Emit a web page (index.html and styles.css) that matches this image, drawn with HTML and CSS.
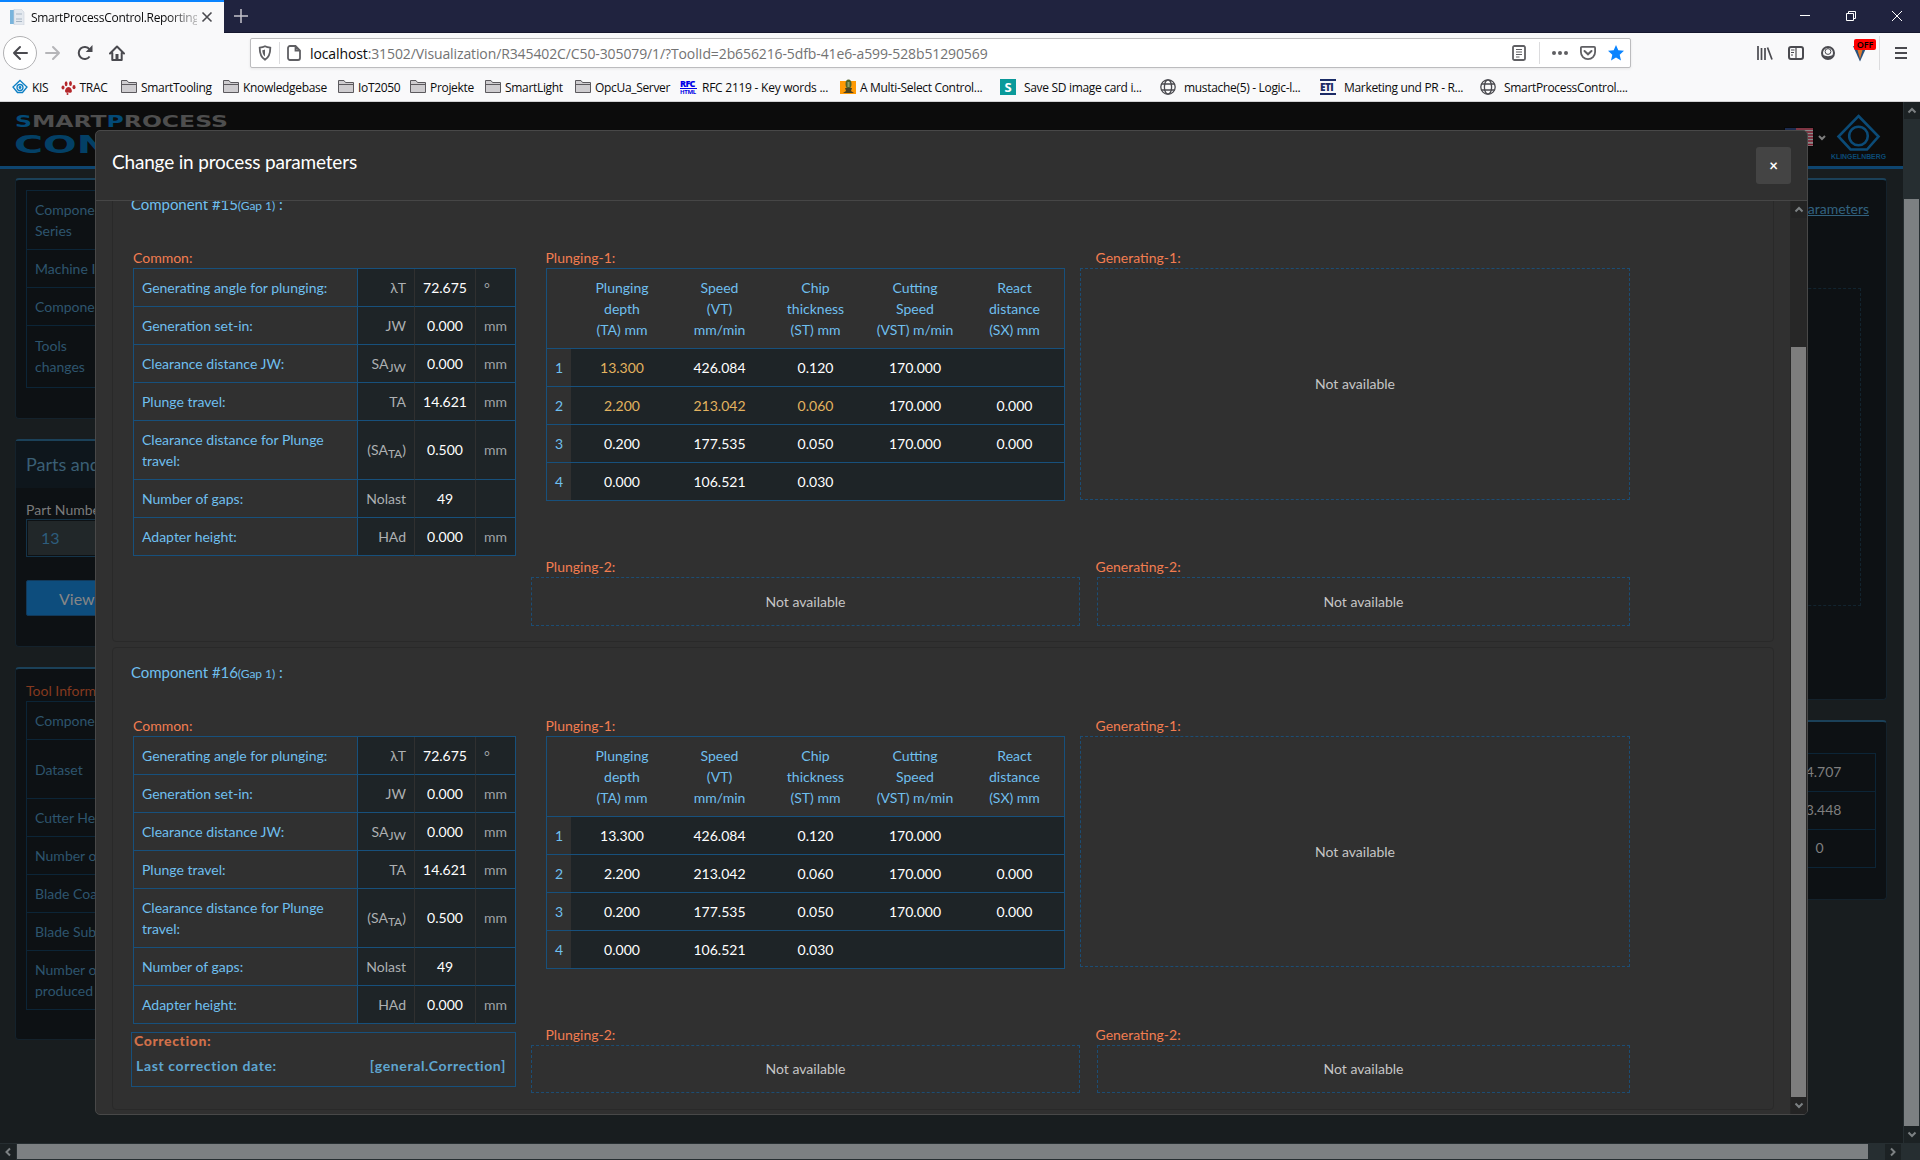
FILE: index.html
```html
<!DOCTYPE html>
<html lang="en">
<head>
<meta charset="utf-8">
<title>SmartProcessControl.Reporting</title>
<link rel="stylesheet" href="styles.css">
</head>
<body>
<svg class="defs" width="0" height="0">
  <symbol id="folder" viewBox="0 0 16 16"><path d="M.5 13.500V1.500h5.500l1.500 2h8v10z" fill="#cfcdd0" stroke="#5c5a5e"/><path d="M1 5.500h14" stroke="#5c5a5e"/></symbol>
  <symbol id="globe" viewBox="0 0 16 16"><g fill="none" stroke="#4a4a4f" stroke-width="1.300"><circle cx="8" cy="8" r="7.200"/><ellipse cx="8" cy="8" rx="3.600" ry="7.200"/><path d="M1.500 5h13M1.500 11h13"/></g></symbol>
  <symbol id="up" viewBox="0 0 16 16"><path d="M4.500 10L8 6.500l3.500 3.500" fill="none" stroke="currentColor" stroke-width="2"/></symbol>
</svg>
<div class="browser">
  <div class="tabbar">
    <div class="tab">
      <svg width="16" height="16" viewBox="0 0 16 16"><path d="M1 1h4v14H1z" fill="#79b4dc"/><path d="M5 0h7l3 3v13H5z" fill="#e4e9ef" stroke="#c9d1da" stroke-width=".6"/><path d="M7 5h6M7 10h6M7 12.500h6" stroke="#a9b6c4"/></svg>
      <span class="tab-title">SmartProcessControl.Reporting</span>
      <svg width="12" height="12" viewBox="0 0 12 12"><path d="M1.500 1.500l9 9M10.500 1.500l-9 9" stroke="#4a4a4f" stroke-width="1.600"/></svg>
    </div>
    <svg class="newtab" width="14" height="14" viewBox="0 0 14 14"><path d="M7 0v14M0 7h14" stroke="#c3c3cc" stroke-width="1.500"/></svg>
    <div class="winbtns">
      <svg width="10" height="10" viewBox="0 0 10 10"><path d="M0 4.500h10" stroke="#fff"/></svg>
      <svg width="10" height="10" viewBox="0 0 10 10"><path d="M.5 2.500h7v7h-7zM2.500 2.500v-2h7v7h-2" fill="none" stroke="#fff"/></svg>
      <svg width="10" height="10" viewBox="0 0 10 10"><path d="M0 0l10 10M10 0L0 10" stroke="#fff"/></svg>
    </div>
  </div>
  <div class="navbar">
    <div class="back"><svg width="16" height="16" viewBox="0 0 16 16"><path d="M15 8H2M8 2L2 8l6 6" fill="none" stroke="#4a4a4f" stroke-width="2" stroke-linecap="round" stroke-linejoin="round"/></svg></div>
    <svg class="fwd" width="16" height="16" viewBox="0 0 16 16"><path d="M1 8h13M8 2l6 6-6 6" fill="none" stroke="#b5b5b8" stroke-width="2" stroke-linecap="round" stroke-linejoin="round"/></svg>
    <svg class="reload" width="16" height="16" viewBox="0 0 16 16"><path d="M12.600 11.500A6 6 0 1 1 12.500 4.300" fill="none" stroke="#4a4a4f" stroke-width="2"/><path d="M15.500 0v7H8.700z" fill="#4a4a4f"/></svg>
    <svg class="home" width="16" height="16" viewBox="0 0 16 16"><path d="M1 8.500L8 1.500l7 7M3.300 8v7h9.400V8" fill="none" stroke="#4a4a4f" stroke-width="2" stroke-linecap="round" stroke-linejoin="round"/><path d="M6.500 9h3v6h-3z" fill="#4a4a4f"/></svg>
    <div class="urlbar">
      <svg class="shield" width="16" height="16" viewBox="0 0 16 16"><path d="M8 1.300c2 1 3.500 1.200 5.300 1.400 0 5.500-.8 9.300-5.300 12C3.500 12 2.700 8.200 2.700 2.700 4.500 2.500 6 2.300 8 1.300z" fill="none" stroke="#5f5f63" stroke-width="1.800"/><path d="M8 4.500v7c-2-1.500-2.600-3.700-2.700-6.300 1-.2 1.900-.3 2.700-.7z" fill="#5f5f63"/></svg>
      <i class="vsep"></i>
      <svg class="page" width="14" height="16" viewBox="0 0 14 16"><path d="M3 1h5.500L13 5.500V13a2 2 0 0 1-2 2H3a2 2 0 0 1-2-2V3a2 2 0 0 1 2-2zM8.500 1v4.500H13" fill="none" stroke="#5f5f63" stroke-width="1.800"/></svg>
      <span class="url"><b>localhost</b>:31502/Visualization/R345402C/C50-305079/1/?ToolId=2b656216-5dfb-41e6-a599-528b51290569</span>
      <svg class="reader" width="14" height="16" viewBox="0 0 14 16"><rect x="1" y="1" width="12" height="14" rx="1.500" fill="none" stroke="#5f5f63" stroke-width="1.800"/><path d="M4 4.500h6M4 7h6M4 9.500h6M4 12h3.500" stroke="#5f5f63"/></svg>
      <i class="vsep tall"></i>
      <svg class="dots" width="16" height="16" viewBox="0 0 16 16" fill="#5f5f63"><circle cx="2" cy="8" r="2"/><circle cx="8" cy="8" r="2"/><circle cx="14" cy="8" r="2"/></svg>
      <svg class="pocket" width="16" height="16" viewBox="0 0 16 16"><path d="M1.900 1.900h12.200a1 1 0 0 1 1 1V7A7 7 0 0 1 .9 7V2.900a1 1 0 0 1 1-1z" fill="none" stroke="#5f5f63" stroke-width="1.800"/><path d="M4.500 6L8 9.300 11.500 6" fill="none" stroke="#5f5f63" stroke-width="2" stroke-linecap="round"/></svg>
      <svg class="star" width="16" height="16" viewBox="0 0 16 16"><path d="M8 0l2.300 5.200 5.700.6-4.300 3.900L13 15.500l-5-2.900-5 2.900 1.300-5.800L0 5.800l5.700-.6z" fill="#0a84ff"/></svg>
    </div>
    <div class="tools">
      <svg class="lib" width="16" height="14" viewBox="0 0 16 14"><path d="M1 0v14M4.500 2v12M8 2v12M10.500 1.500l4.500 12" stroke="#4a4a4f" stroke-width="1.700"/></svg>
      <svg class="side" width="16" height="14" viewBox="0 0 16 14"><rect x="1" y="1" width="14" height="12" rx="2" fill="none" stroke="#4a4a4f" stroke-width="2"/><path d="M8 1v12M3 4h3.500M3 6.500h3M3 9h2" stroke="#4a4a4f" stroke-width="1.200"/></svg>
      <svg class="acct" width="14" height="14" viewBox="0 0 14 14"><circle cx="7" cy="7" r="6" fill="none" stroke="#4a4a4f" stroke-width="2"/><circle cx="7" cy="5.500" r="2.900" fill="#f9f9fa" stroke="#4a4a4f" stroke-width="1"/><path d="M2 8.500c2 2.300 8 2.300 10 0-1 5-9 5-10 0z" fill="#4a4a4f"/></svg>
      <div class="filter"><svg width="14" height="17" viewBox="0 0 14 17"><path d="M0 1h14L7 16.500z" fill="#27507c"/><path d="M4.500 5h5L7 14z" fill="#e0762b"/></svg><span class="off">OFF</span></div>
      <i class="vsep edge"></i>
      <svg class="burger" width="12" height="12" viewBox="0 0 12 12"><path d="M0 1h12M0 6h12M0 11h12" stroke="#4a4a4f" stroke-width="2"/></svg>
    </div>
  </div>
  <div class="bookmarks">
    <div class="bm"><svg width="16" height="16" viewBox="0 0 16 16" fill="none" stroke="#0d7fc4" stroke-width="1.300"><path d="M8 1.500L15 8l-4.500 5.500h-5L1 8z"/><circle cx="8" cy="8.500" r="3"/><circle cx="8" cy="8.500" r=".8"/></svg><span>KIS</span></div>
    <div class="bm"><svg width="15" height="16" viewBox="0 0 15 16" fill="#b4262a"><path d="M7.500 8c2.500 0 4 3.500 3.200 5-.9 1.200-1.700.4-3.200.4s-2.300.8-3.200-.4C3.500 11.500 5 8 7.500 8z"/><ellipse cx="2" cy="8.500" rx="1.500" ry="2.100"/><ellipse cx="5.100" cy="4.800" rx="1.400" ry="2.500"/><ellipse cx="9.500" cy="4.600" rx="1.400" ry="2.500"/><ellipse cx="13" cy="8.200" rx="1.500" ry="2.100"/><circle cx="6.500" cy="15" r="1"/></svg><span>TRAC</span></div>
    <div class="bm"><svg width="16" height="16"><use href="#folder"/></svg><span>SmartTooling</span></div>
    <div class="bm"><svg width="16" height="16"><use href="#folder"/></svg><span>Knowledgebase</span></div>
    <div class="bm"><svg width="16" height="16"><use href="#folder"/></svg><span>IoT2050</span></div>
    <div class="bm"><svg width="16" height="16"><use href="#folder"/></svg><span>Projekte</span></div>
    <div class="bm"><svg width="16" height="16"><use href="#folder"/></svg><span>SmartLight</span></div>
    <div class="bm"><svg width="16" height="16"><use href="#folder"/></svg><span>OpcUa_Server</span></div>
    <div class="bm rfc-bm"><span class="rfc"><b>RFC</b><small>HTML</small></span><span>RFC 2119 - Key words ...</span></div>
    <div class="bm"><svg width="16" height="16" viewBox="0 0 16 16"><path d="M0 2h16v13H0z" fill="#ff9a05"/><ellipse cx="8.500" cy="5" rx="3" ry="4.500" fill="#51642c"/><path d="M5 9h7l-1 3 3 2H3l3-2z" fill="#4a4222"/><path d="M7.500 3h2v5h-2z" fill="#8fa06a"/></svg><span>A Multi-Select Control...</span></div>
    <div class="bm wide"><span class="sicon">S</span><span>Save SD image card i...</span></div>
    <div class="bm wide"><svg width="16" height="16"><use href="#globe"/></svg><span>mustache(5) - Logic-l...</span></div>
    <div class="bm wide"><span class="eti">ETI</span><span>Marketing und PR - R...</span></div>
    <div class="bm wide"><svg width="16" height="16"><use href="#globe"/></svg><span>SmartProcessControl....</span></div>
  </div>

  <div class="viewport">
    <div class="site">
      <header class="site-head">
        <svg class="brand" width="230" height="56" viewBox="0 0 230 56">
          <text x="15" y="25" textLength="213" lengthAdjust="spacingAndGlyphs" class="brand-a"><tspan class="bl">S</tspan>MART<tspan class="bl">P</tspan>ROCESS</text>
          <text x="14" y="51" textLength="212" lengthAdjust="spacingAndGlyphs" class="brand-b">CONTROL</text>
        </svg>
        <div class="head-right">
          <svg class="flag" width="30" height="20" viewBox="0 0 30 20"><path d="M0 0h30v20H0z" fill="#080808"/><path d="M1 1h28v18H1z" fill="#8a8a8a"/><path d="M1 2h28M1 5h28M1 8h28M1 11h28M1 14h28M1 17.500h28" stroke="#7c1a2c" stroke-width="1.500"/><path d="M1 1h11v9H1z" fill="#1d2c4f"/></svg>
          <svg class="caret" width="8" height="6" viewBox="0 0 8 6"><path d="M1 1l3 3 3-3" fill="none" stroke="#7e7e7e" stroke-width="2"/></svg>
          <svg class="kling" width="56" height="47" viewBox="0 0 56 47"><g fill="none" stroke="#0b4b77" stroke-width="2.600"><path d="M27.500 3L47.500 23.500 36 36.500H19.500L7.500 23.500z"/><circle cx="27.500" cy="23" r="9.300"/></g><text x="0" y="46" textLength="55" lengthAdjust="spacingAndGlyphs" class="kling-t">KLINGELNBERG</text></svg>
        </div>
      </header>
      <div class="cols">
        <div class="col-left">
          <section class="card c1">
            <div class="list">
              <div>Component<br>Series</div><div>Machine ID</div><div>Component</div><div class="t62">Tools<br>changes</div>
            </div>
          </section>
          <section class="card c2">
            <h3>Parts and Tools</h3>
            <label>Part Number</label>
            <div class="field">13</div>
            <div class="btn">View parts</div>
          </section>
          <section class="card c3">
            <h4>Tool Information</h4>
            <div class="list">
              <div>Component</div><div class="t59">Dataset</div><div>Cutter Head</div><div>Number of</div><div>Blade Coating</div><div>Blade Substrate</div><div>Number of<br>produced</div>
            </div>
          </section>
        </div>
        <div class="col-right">
          <section class="card c4"><a>Parameters</a><div class="dots-box"></div></section>
          <section class="card c5"><div class="vals"><div>14.707</div><div>13.448</div><div>0</div></div></section>
        </div>
      </div>
    </div>
    <div class="vbar"><svg class="sb" width="16" height="17"><use href="#up"/></svg><i></i><svg class="sb dn" width="16" height="17"><use href="#up"/></svg></div>
    <div class="hbar"><svg class="sb lf" width="16" height="16"><use href="#up"/></svg><i></i><svg class="sb rt" width="16" height="16"><use href="#up"/></svg></div>

    <div class="modal">
      <div class="modal-head"><h2>Change in process parameters</h2><div class="close">×</div></div>
      <div class="modal-body">
        <div class="scroll">
          <section class="comp">
            <h5>Component #15<small>(Gap 1)</small> :</h5>
            <div class="grid">
              <div class="common">
                <h6>Common:</h6>
                <table class="kv">
                  <tr><th>Generating angle for plunging:</th><td>λT</td><td>72.675</td><td>°</td></tr>
                  <tr><th>Generation set-in:</th><td>JW</td><td>0.000</td><td>mm</td></tr>
                  <tr><th>Clearance distance JW:</th><td>SA<sub>JW</sub></td><td>0.000</td><td>mm</td></tr>
                  <tr><th>Plunge travel:</th><td>TA</td><td>14.621</td><td>mm</td></tr>
                  <tr><th>Clearance distance for Plunge travel:</th><td>(SA<sub>TA</sub>)</td><td>0.500</td><td>mm</td></tr>
                  <tr><th>Number of gaps:</th><td>Nolast</td><td>49</td><td></td></tr>
                  <tr><th>Adapter height:</th><td>HAd</td><td>0.000</td><td>mm</td></tr>
                </table>
              </div>
              <div class="cell">
                <h6>Plunging-1:</h6>
                <table class="steps">
                  <tr><th></th><th>Plunging<br>depth<br>(TA) mm</th><th>Speed<br>(VT)<br>mm/min</th><th>Chip<br>thickness<br>(ST) mm</th><th>Cutting<br>Speed<br>(VST) m/min</th><th>React<br>distance<br>(SX) mm</th></tr>
                  <tr><th>1</th><td class="hi">13.300</td><td>426.084</td><td>0.120</td><td>170.000</td><td></td></tr>
                  <tr><th>2</th><td class="hi">2.200</td><td class="hi">213.042</td><td class="hi">0.060</td><td>170.000</td><td>0.000</td></tr>
                  <tr><th>3</th><td>0.200</td><td>177.535</td><td>0.050</td><td>170.000</td><td>0.000</td></tr>
                  <tr><th>4</th><td>0.000</td><td>106.521</td><td>0.030</td><td></td><td></td></tr>
                </table>
              </div>
              <div class="cell"><h6>Generating-1:</h6><div class="na big">Not available</div></div>
              <div class="cell"><h6>Plunging-2:</h6><div class="na">Not available</div></div>
              <div class="cell"><h6>Generating-2:</h6><div class="na inset">Not available</div></div>
            </div>
          </section>
          <section class="comp last">
            <h5>Component #16<small>(Gap 1)</small> :</h5>
            <div class="grid">
              <div class="common">
                <h6>Common:</h6>
                <table class="kv">
                  <tr><th>Generating angle for plunging:</th><td>λT</td><td>72.675</td><td>°</td></tr>
                  <tr><th>Generation set-in:</th><td>JW</td><td>0.000</td><td>mm</td></tr>
                  <tr><th>Clearance distance JW:</th><td>SA<sub>JW</sub></td><td>0.000</td><td>mm</td></tr>
                  <tr><th>Plunge travel:</th><td>TA</td><td>14.621</td><td>mm</td></tr>
                  <tr><th>Clearance distance for Plunge travel:</th><td>(SA<sub>TA</sub>)</td><td>0.500</td><td>mm</td></tr>
                  <tr><th>Number of gaps:</th><td>Nolast</td><td>49</td><td></td></tr>
                  <tr><th>Adapter height:</th><td>HAd</td><td>0.000</td><td>mm</td></tr>
                </table>
                <div class="corr"><strong>Correction:</strong><p><span>Last correction date:</span><span class="cv">[general.Correction]</span></p></div>
              </div>
              <div class="cell">
                <h6>Plunging-1:</h6>
                <table class="steps">
                  <tr><th></th><th>Plunging<br>depth<br>(TA) mm</th><th>Speed<br>(VT)<br>mm/min</th><th>Chip<br>thickness<br>(ST) mm</th><th>Cutting<br>Speed<br>(VST) m/min</th><th>React<br>distance<br>(SX) mm</th></tr>
                  <tr><th>1</th><td>13.300</td><td>426.084</td><td>0.120</td><td>170.000</td><td></td></tr>
                  <tr><th>2</th><td>2.200</td><td>213.042</td><td>0.060</td><td>170.000</td><td>0.000</td></tr>
                  <tr><th>3</th><td>0.200</td><td>177.535</td><td>0.050</td><td>170.000</td><td>0.000</td></tr>
                  <tr><th>4</th><td>0.000</td><td>106.521</td><td>0.030</td><td></td><td></td></tr>
                </table>
              </div>
              <div class="cell"><h6>Generating-1:</h6><div class="na big">Not available</div></div>
              <div class="cell"><h6>Plunging-2:</h6><div class="na">Not available</div></div>
              <div class="cell"><h6>Generating-2:</h6><div class="na inset">Not available</div></div>
            </div>
          </section>
        </div>
        <div class="mbar"><svg class="sb" width="16" height="17"><use href="#up"/></svg><i></i><svg class="sb dn" width="16" height="17"><use href="#up"/></svg></div>
      </div>
    </div>
  </div>
</div>
</body>
</html>
```
FILE: styles.css
```css
* { box-sizing: border-box; }
body { margin: 0; font-family: Lato, sans-serif; font-size: 14px; line-height: 21px; }
h2, h3, h4, h5, h6, p { margin: 0; font-weight: 400; }
svg { display: block; flex: none; }
.defs { position: absolute; }
.browser { width: 1920px; height: 1160px; overflow: hidden; display: flex; flex-direction: column; }

/* browser chrome */
.tabbar, .navbar, .bookmarks { font-family: "Open Sans", sans-serif; }
.tabbar { height: 33px; flex: none; background: #20233f; display: flex; align-items: center; border-bottom: 1px solid #15172e; }
.tab { width: 224px; height: 33px; background: #f9f9fa; border-top: 2px solid #0a84ff; display: flex; align-items: center; padding-left: 9px; }
.tab-title { width: 166px; margin-left: 6px; margin-right: 4px; font-size: 12px; letter-spacing: -.3px; color: #0c0c0d; white-space: nowrap; overflow: hidden; -webkit-mask-image: linear-gradient(90deg, #000 136px, rgba(0,0,0,.25) 166px); mask-image: linear-gradient(90deg, #000 136px, rgba(0,0,0,.25) 166px); }
.newtab { margin-left: 10px; }
.winbtns { margin-left: auto; display: flex; gap: 36px; padding-right: 18px; }
.navbar { height: 39px; flex: none; background: #f9f9fa; display: flex; align-items: center; padding-top: 1px; }
.back { width: 34px; height: 34px; margin-left: 3px; border: 1px solid #b1b1b3; border-radius: 50%; display: flex; align-items: center; justify-content: center; background: #fff; }
.fwd { margin-left: 8px; }
.reload { margin-left: 16px; }
.home { margin-left: 16px; }
.urlbar { margin-left: 125px; width: 1381px; height: 30px; background: #fff; border: 1px solid #bcbcbe; border-radius: 2px; box-shadow: 0 1px 3px rgba(0,0,0,.08); display: flex; align-items: center; padding-left: 6px; }
.vsep { width: 1px; height: 22px; background: #dcdcde; margin-left: 6px; }
.page { margin-left: 7px; }
.url { margin-left: 9px; width: 1202px; font-size: 14px; letter-spacing: -.11px; color: #737373; white-space: nowrap; }
.url b { font-weight: 400; color: #0c0c0d; }
.vsep.tall { margin-left: 13px; }
.dots { margin-left: 12px; }
.pocket, .star { margin-left: 12px; }
.tools { display: flex; align-items: center; flex: 1; }
.lib { margin-left: 126px; }
.side { margin-left: 15px; }
.acct { margin-left: 17px; }
.filter { position: relative; margin-left: 18px; width: 26px; height: 17px; }
.off { position: absolute; left: 1px; top: -6px; width: 22px; height: 11px; background: #f00; border-radius: 2px; font-size: 9px; font-weight: 600; line-height: 11px; text-align: center; color: #000; }
.vsep.edge { height: 34px; margin-left: 0; }
.burger { margin-left: 15px; }
.bookmarks { height: 30px; flex: none; background: #f9f9fa; border-bottom: 1px solid #d2d2d4; display: grid; grid-template-columns: 48.500px 60.500px 102px 115px 72px 75px 90px 105px 160px 160px 160px 160px 160px 160px; padding: 1px 0 0 12px; align-items: center; }
.bm { display: flex; align-items: center; gap: 4px; font-size: 12px; letter-spacing: -.32px; color: #0c0c0d; white-space: nowrap; }
.bm.rfc-bm { gap: 5px; letter-spacing: -.25px; }
.bm.wide { gap: 8px; }
.rfc { width: 17px; height: 16px; color: #0000e6; display: flex; flex-direction: column; }
.rfc b { font-size: 9px; line-height: 9px; font-weight: 800; letter-spacing: -.7px; border-bottom: 1px solid; }
.rfc small { font-size: 6px; line-height: 6px; font-weight: 700; letter-spacing: -.3px; }
.sicon { width: 16px; height: 16px; background: #0a9a9a; color: #fff; font-weight: 700; text-align: center; line-height: 16px; font-size: 13px; }
.eti { width: 16px; height: 16px; border-top: 2px solid #1c2b66; border-bottom: 2px solid #1c2b66; color: #1c2b66; font-weight: 800; font-size: 10px; line-height: 12px; letter-spacing: -.6px; }

/* page behind the dialog */
.viewport { position: relative; flex: 1; background: #181d1f; }
.site { height: 1041px; width: 1903px; overflow: hidden; }
.site-head { height: 67px; background: #0c0c0c; border-bottom: 3px solid #0e456f; display: flex; justify-content: space-between; }
.brand-a { font: 700 15px "DejaVu Sans", sans-serif; fill: #4e4e4e; }
.brand-a .bl { fill: #034a77; }
.brand-b { font: 700 25px "DejaVu Sans", sans-serif; fill: #034066; }
.head-right { display: flex; align-items: flex-start; padding-right: 16px; }
.flag { margin-top: 25px; }
.caret { margin: 33px 5px 0 4px; }
.kling { margin-top: 11px; }
.kling-t { font: 700 7.500px "Liberation Sans", sans-serif; fill: #0b4b77; }
.cols { display: flex; justify-content: space-between; padding: 9px 16px 0 15px; }
.col-left, .col-right { width: 380px; display: flex; flex-direction: column; gap: 20px; }
.col-left { padding-right: 1px; }
.card { background: #0d1114; border: 1px solid #14222c; border-top: 2px solid #1b4159; border-radius: 4px; padding: 0 10px; }
.c1 { height: 241px; padding-top: 10px; }
.c2 { height: 208px; padding: 0; }
.c3 { height: 373px; padding-top: 11px; }
.c4 { height: 522px; padding: 18px 17px 0; text-align: right; }
.c5 { height: 180px; padding-top: 31px; }
.list { border: 1px solid #0c2537; border-bottom: 0; color: #2d556e; }
.list div { min-height: 38px; padding: 7.500px 8px; border-bottom: 1px solid #0c2537; }
.c1 .list div:first-child, .c3 .list div:last-child { height: 59px; }
.list .t59 { height: 59px; padding-top: 18.500px; }
.list .t62 { height: 62px; padding-top: 8.500px; }
.c2 h3 { height: 47px; background: #0e161c; padding: 0 10px; font-size: 18px; line-height: 47px; color: #3a5f75; }
.c2 label { display: block; padding: 11px 10px 0; height: 31px; color: #7b7b7b; }
.field { margin: 0 10px; height: 38px; border: 1px solid #153449; box-shadow: inset 0 0 0 1px #0d1114; background: #212729; padding: 7px 14px; font-size: 16px; color: #2d5d7d; }
.btn { margin: 23px 10px 0; height: 36px; background: #0d4d7d; border: 1px solid #11395a; border-radius: 2px; padding: 7px 32px; font-size: 16px; color: #868686; }
.c3 h4 { color: #84391f; }
.c4 a { color: #32627f; text-decoration: underline; }
.dots-box { margin: 69px 8px 0 0; height: 318px; border: 1px dashed #12242f; }
.vals { margin-left: auto; width: 112px; border-top: 1px solid #0c2537; border-right: 1px solid #0c2537; text-align: center; color: #7f7f7f; }
.vals div { height: 38px; padding: 7px 0; border-bottom: 1px solid #0c2537; }

/* scroll bars */
.sb { display: block; background: #1c2224; color: #7c8183; }
.dn { transform: rotate(180deg); }
.lf { transform: rotate(-90deg); }
.rt { transform: rotate(90deg); }
.vbar { position: absolute; right: 0; top: 0; width: 17px; height: 1041px; padding-left: 1px; background: #262e31; display: flex; flex-direction: column; }
.vbar i { flex: 1; margin-top: 80px; width: 15px; background: #7c8082; }
.hbar { position: absolute; left: 0; bottom: 0; width: 1920px; height: 17px; padding-top: 1px; background: #262e31; display: flex; }
.hbar i { width: 1851px; margin: 0 17px 0 1px; height: 15px; background: #7c8082; }

/* dialog */
.modal { position: absolute; left: 95px; top: 28px; width: 1713px; height: 985px; background: #303030; border: 1px solid #484848; border-radius: 5px; overflow: hidden; display: flex; flex-direction: column; }
.modal-head { height: 70px; flex: none; border-bottom: 1px solid #464646; display: flex; justify-content: space-between; align-items: flex-start; padding: 16px 16px 0 16px; }
.modal-head h2 { font-size: 19px; letter-spacing: -.18px; line-height: 30px; color: #fff; }
.close { width: 35px; height: 37px; border-radius: 3px; background: #444; color: #fff; font-weight: 700; font-size: 15px; line-height: 37px; text-align: center; }
.modal-body { flex: 1; display: flex; min-height: 0; }
.scroll { flex: 1; overflow: hidden; display: flex; flex-direction: column; justify-content: flex-end; gap: 5px; padding: 0 16px 4px; }
.mbar { width: 17px; padding-left: 1px; background: #272727; display: flex; flex-direction: column; }
.mbar .sb { background: #242424; }
.mbar i { flex: 1; margin-top: 129px; width: 15px; background: #7d7d7d; }
.comp { flex: none; height: 463px; border: 1px solid #292929; border-radius: 4px; padding: 12px 0 0 20px; }
h5 { margin-left: -2px; font-size: 15px; letter-spacing: -.05px; line-height: 24px; height: 24px; color: #6fbfee; }
h5 small { font-size: 12px; }
.grid { margin-top: 31px; display: grid; grid-template-columns: 398px 549px 550px; grid-template-rows: 254px 70px; row-gap: 55px; }
.common { grid-row: span 2; }
h6 { font-size: 14px; line-height: 21px; height: 21px; color: #f27d50; }
.cell h6 { padding-left: 14.500px; }
.cell:nth-child(3) h6, .cell:nth-child(5) h6 { padding-left: 15.500px; }
table { border-collapse: separate; border-spacing: 0; table-layout: fixed; border: 1px solid #17507c; border-bottom: 0; }
th, td { padding: 7.500px 8px 8.500px; font-weight: 400; border-bottom: 1px solid #17507c; }
th { color: #6fbfee; }
td { background: #1e2427; color: #fff; text-align: center; }
.kv { width: 382px; }
.kv th { text-align: left; width: 223px; }
.kv td { border-left: 1px solid #303030; width: 61px; }
.kv td:nth-child(2) { width: 57px; text-align: right; color: #adb0b2; border-left-color: #17507c; }
.kv td:last-child { width: 40px; text-align: left; color: #9fa3a6; }
.kv td:empty { padding: 0; }
sub { font-size: 12px; line-height: 0; vertical-align: -2.500px; }
.steps { margin-left: 15px; width: 519px; }
.steps th, .steps td { padding: 7.500px 0 8.500px; }
.steps th:nth-child(1) { width: 24px; }
.steps th:nth-child(2) { width: 102px; }
.steps th:nth-child(3) { width: 93px; }
.steps th:nth-child(4) { width: 99px; }
.steps th:nth-child(5) { width: 100px; }
.steps .hi { color: #e3b35f; }
.na { height: 49px; border: 1px dashed #1c4d74; display: flex; align-items: center; justify-content: center; padding-bottom: 1px; color: #c6c6c6; }
.na.big { height: 232px; }
.na.inset { margin-left: 17px; }
.last .na { height: 48px; }
.last .na.big { height: 231px; }
.corr { margin: 8px 0 0 -2px; width: 385px; height: 55px; border: 1px solid #17507c; padding: 0 9px 0 2px; font-weight: 700; letter-spacing: .63px; }
.corr strong { display: block; line-height: 15px; color: #d1704a; }
.corr p { display: flex; justify-content: space-between; padding-left: 2px; margin-top: 7px; font-weight: 700; color: #5fa6d0; }
```
